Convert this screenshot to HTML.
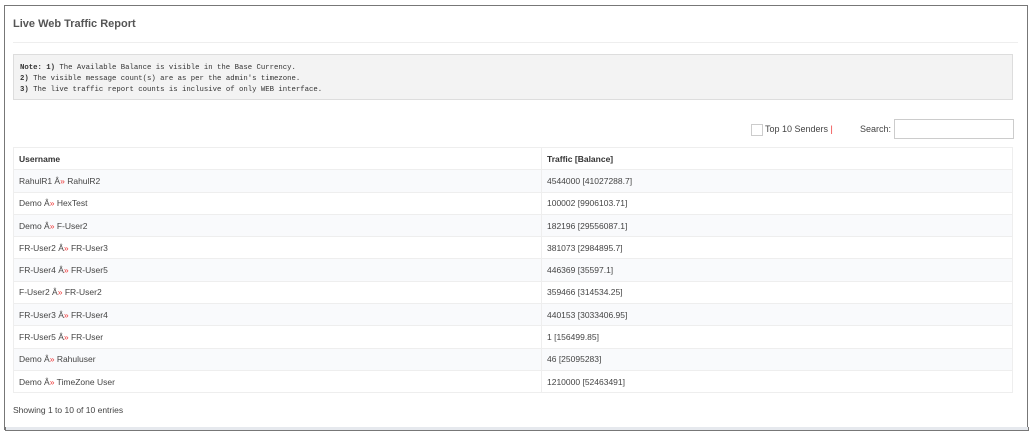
<!DOCTYPE html>
<html><head><meta charset="utf-8"><style>
body{margin:0;width:1033px;height:436px;background:#fff;font-family:"Liberation Sans",sans-serif;position:relative;overflow:hidden}
.frame{position:absolute;left:4px;top:5px;width:1022px;height:424px;border:1px solid #777;border-bottom:none;background:#fff}
.bottom{position:absolute;left:5px;top:427px;width:1022px;height:3px;background:#e6e9ee;border-left:1px solid #777;border-right:1px solid #777;border-bottom:1px solid #777}
.title{position:absolute;left:8px;top:12px;font-size:11px;color:#555;font-weight:bold}
.hr{position:absolute;left:8px;top:36px;width:1005px;height:1px;background:#eee}
.note{position:absolute;left:8px;top:48px;width:1000px;height:46px;background:#f3f3f3;border:1px solid #ddd;font-family:"Liberation Mono",monospace;font-size:7.3px;color:#333;line-height:11px;padding:8px 6px 0;box-sizing:border-box}
.cb{position:absolute;left:746px;top:118px;width:10px;height:10px;border:1px solid #ccc}
table{position:absolute;left:8px;top:141px;width:1000px;border-collapse:collapse;font-size:8.5px;color:#444}
td,th{border:1px solid #eee;height:21.3px;padding:0 5px;text-align:left}
th{color:#333;font-size:8.5px}
tr:nth-child(even) td{background:#f9fafc}
.r{color:#e33}
.show{position:absolute;left:8px;top:399px;font-size:8.5px;color:#444}
</style></head><body>
<div class="frame">
<div class="title">Live Web Traffic Report</div>
<div class="hr"></div>
<div class="note"><b>Note: 1)</b> The Available Balance is visible in the Base Currency.<br><b>2)</b> The visible message count(s) are as per the admin's timezone.<br><b>3)</b> The live traffic report counts is inclusive of only WEB interface.</div>
<div class="cb"></div>
<div style="position:absolute;left:760px;top:118px;font-size:9px;color:#444">Top 10 Senders <span class="r">|</span></div>
<div style="position:absolute;left:855px;top:118px;font-size:9px;color:#444">Search:</div>
<div style="position:absolute;left:889px;top:113px;width:118px;height:18px;border:1px solid #ccc"></div>
<table>
<tr><th style="width:517px">Username</th><th>Traffic [Balance]</th></tr>
<tr><td>RahulR1 Â<span class="r">»</span> RahulR2</td><td>4544000 [41027288.7]</td></tr>
<tr><td>Demo Â<span class="r">»</span> HexTest</td><td>100002 [9906103.71]</td></tr>
<tr><td>Demo Â<span class="r">»</span> F-User2</td><td>182196 [29556087.1]</td></tr>
<tr><td>FR-User2 Â<span class="r">»</span> FR-User3</td><td>381073 [2984895.7]</td></tr>
<tr><td>FR-User4 Â<span class="r">»</span> FR-User5</td><td>446369 [35597.1]</td></tr>
<tr><td>F-User2 Â<span class="r">»</span> FR-User2</td><td>359466 [314534.25]</td></tr>
<tr><td>FR-User3 Â<span class="r">»</span> FR-User4</td><td>440153 [3033406.95]</td></tr>
<tr><td>FR-User5 Â<span class="r">»</span> FR-User</td><td>1 [156499.85]</td></tr>
<tr><td>Demo Â<span class="r">»</span> Rahuluser</td><td>46 [25095283]</td></tr>
<tr><td>Demo Â<span class="r">»</span> TimeZone User</td><td>1210000 [52463491]</td></tr>
</table>
<div class="show">Showing 1 to 10 of 10 entries</div>
</div>
<div class="bottom"></div>
</body></html>
